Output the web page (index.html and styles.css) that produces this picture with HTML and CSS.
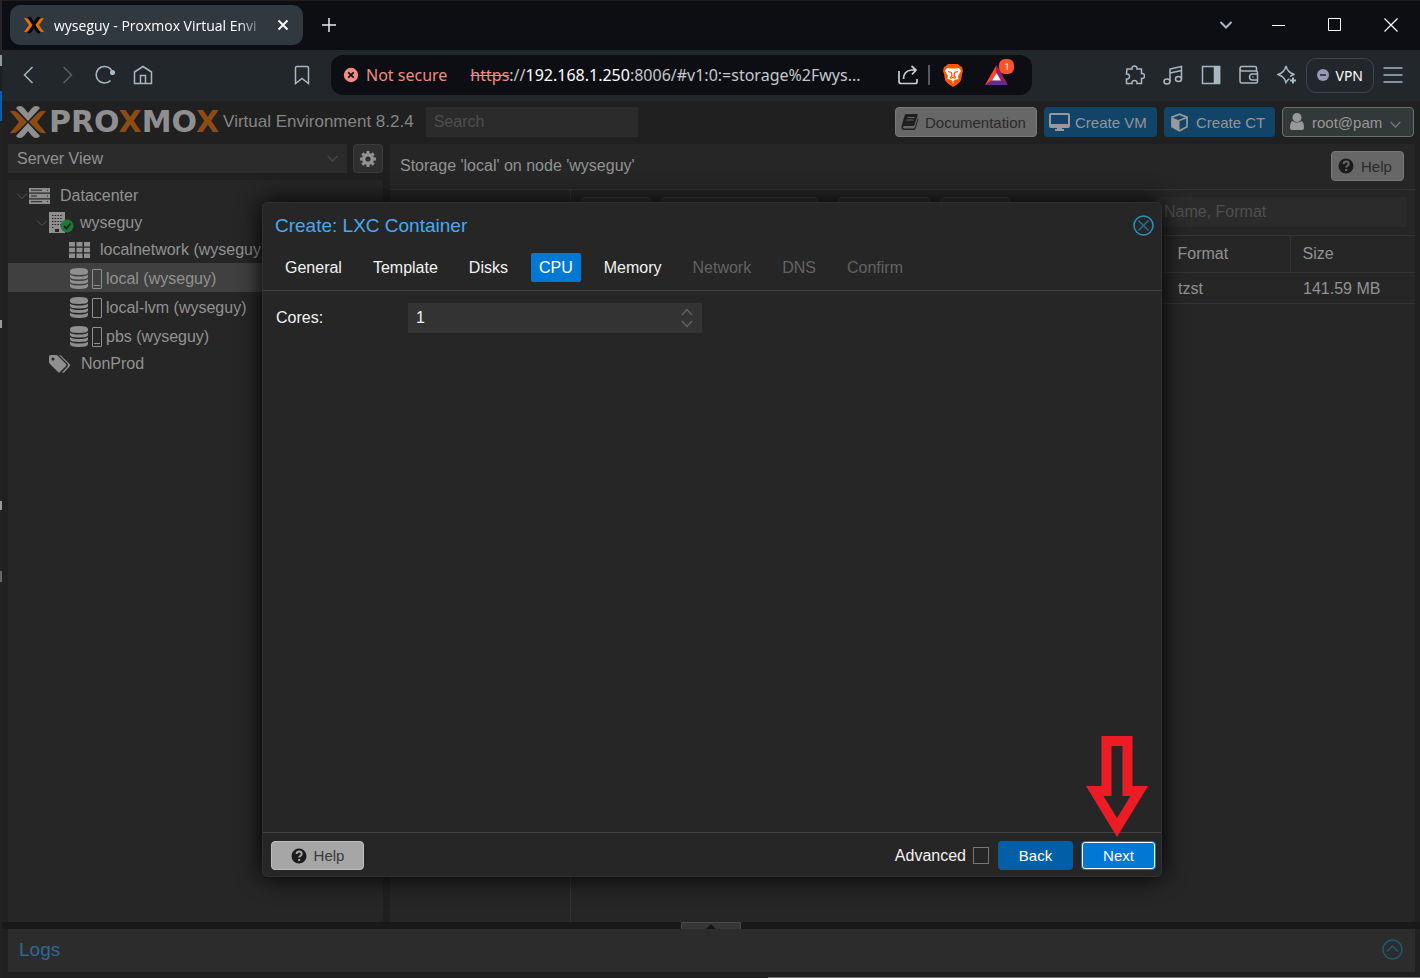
FILE: index.html
```
<!DOCTYPE html>
<html lang="en">

<head>
    <meta charset="UTF-8" />
    <meta name="viewport" content="width=device-width, initial-scale=1.0" />
    <title>wyseguy - Proxmox Virtual Environment</title>
    <link rel="stylesheet" href="styles.css">
</head>

<body>
    <div class="desktop-edge"></div>
    <div class="browser">
        <div class="tab-strip">
            <div class="browser-tab">
                <svg width="20" height="18" viewBox="0 0 20 18">
                    <path d="M3.500 1q2.500-1 4 1L10 5.500 12.500 2q1.500-2 4-1L11.500 9l5 8q-2.500 1-4-1L10 12.500 7.500 16q-1.500 2-4 1l5-8z" fill="#000" />
                    <path d="M0 2q3-.5 4.500 1.500L8.500 9l-4 5.500Q3 16.500 0 16l5-7zM20 2q-3-.5-4.500 1.500L11.500 9l4 5.500q1.500 2 4.500 1.500l-5-7z" fill="#e57000" />
                </svg>
                <span class="tab-title">wyseguy - Proxmox Virtual Envi</span>
                <button class="bare-btn" aria-label="Close tab">
                    <svg width="12" height="12" viewBox="0 0 12 12"><path d="M1.500 1.500l9 9M10.500 1.500l-9 9" stroke="#fff" stroke-width="1.800" /></svg>
                </button>
            </div>
            <button class="bare-btn new-tab" aria-label="New tab">
                <svg width="14" height="14" viewBox="0 0 14 14"><path d="M7 0v14M0 7h14" stroke="#e8ecef" stroke-width="1.500" /></svg>
            </button>
            <div class="window-controls">
                <button class="bare-btn tab-search" aria-label="Search tabs">
                    <svg width="14" height="10" viewBox="0 0 14 10"><path d="M1.500 2L7 7.500 12.500 2" fill="none" stroke="#a7b8c2" stroke-width="2" /></svg>
                </button>
                <button class="bare-btn" aria-label="Minimize">
                    <svg width="14" height="14" viewBox="0 0 14 14"><path d="M0 7.500h13" stroke="#fff" /></svg>
                </button>
                <button class="bare-btn" aria-label="Maximize">
                    <svg width="14" height="14" viewBox="0 0 14 14"><path d="M.5.5h12v12H.5z" fill="none" stroke="#fff" /></svg>
                </button>
                <button class="bare-btn" aria-label="Close window">
                    <svg width="14" height="14" viewBox="0 0 14 14"><path d="M.5.5l13 13M13.500.5l-13 13" stroke="#fff" stroke-width="1.200" /></svg>
                </button>
            </div>
        </div>

        <div class="toolbar">
            <button class="bare-btn tool" aria-label="Back">
                <svg width="20" height="20" viewBox="0 0 20 20"><path d="M13.500 2L5.500 10l8 8" /></svg>
            </button>
            <button class="bare-btn tool tool-off" aria-label="Forward">
                <svg width="20" height="20" viewBox="0 0 20 20"><path d="M6.500 2l8 8-8 8" /></svg>
            </button>
            <button class="bare-btn tool" aria-label="Reload">
                <svg width="20" height="20" viewBox="0 0 20 20"><path d="M15.500 15.500A8.300 8.300 0 1 1 17.500 7.500" /><circle cx="17.500" cy="7.500" r="1.800" fill="#a7b8c2" /></svg>
            </button>
            <button class="bare-btn tool" aria-label="Home">
                <svg width="20" height="20" viewBox="0 0 20 20"><path d="M1.500 7L10 1.500 18.500 7v11.500h-17zM7.500 18V10.500h5V18" /></svg>
            </button>
            <div class="address-area">
                <button class="bare-btn tool" aria-label="Bookmark">
                    <svg width="20" height="20" viewBox="0 0 20 20"><path d="M3.500 3q0-1.500 1.500-1.500h10q1.500 0 1.500 1.500v15.500L10 13.500l-6.500 5z" /></svg>
                </button>
                <div class="address-bar">
                    <svg width="16" height="16" viewBox="0 0 16 16"><circle cx="8" cy="8" r="7.200" fill="#f28b82" /><path d="M5.300 5.300l5.400 5.400M10.700 5.300l-5.400 5.400" stroke="#0d0e14" stroke-width="1.800" /></svg>
                    <span class="not-secure">Not secure</span>
                    <span class="url"><s>https</s>://<b>192.168.1.250</b>:8006/#v1:0:=storage%2Fwys...</span>
                    <svg class="share" width="20" height="20" viewBox="0 0 20 20" fill="none" stroke="#c8ced2" stroke-width="1.700"><path d="M1 6v10.500q0 2 2 2h14.500q1.500 0 1.500-2V14M5.500 14q0-8 8-9h4M13.500 1L18 5l-4 4.500" /></svg>
                    <span class="divider"></span>
                    <svg class="brave" width="20" height="24" viewBox="0 0 20 24">
                        <path d="M5 1h10l2 2 2 1 1 4-1 3-1 6q-1 3-8 7-7-4-8-7L1 11 0 8l1-4 2-1z" fill="#ff5500" />
                        <path d="M4 5l4 .5h4L16 5l2 3-3 5 .5 3-4 1L10 21l-1.500-4-4-1L5 13 2 8z" fill="#fff" />
                        <path d="M5 8.500l3.500 1L9 13l-2 1.500M15 8.500l-3.500 1L11 13l2 1.500M7.500 15.500l2.500-1 2.500 1M10 18v1.500" fill="none" stroke="#ff5500" stroke-width="1.200" />
                    </svg>
                    <span class="rewards">
                        <svg width="23" height="20" viewBox="0 0 23 20">
                            <path d="M11.500 0v8L7 15.500 0 20z" fill="#ff4724" />
                            <path d="M11.500 0L23 20l-7-4.500L11.500 8z" fill="#9e1f63" />
                            <path d="M0 20l7-4.500h9L23 20z" fill="#662d91" />
                            <path d="M11.500 8l4.500 7.500H7z" fill="#fff" />
                        </svg>
                        <span class="badge">1</span>
                    </span>
                </div>
            </div>
            <button class="bare-btn tool" aria-label="Extensions">
                <svg width="20" height="20" viewBox="0 0 20 20"><path d="M2 4h5c-1-4 6-4 5 0h4.500v4.500c4-1 4 6 0 5V18.500H12c1-4-6-4-5 0H1.500V14c4 1 4-6 0-5z" /></svg>
            </button>
            <button class="bare-btn tool" aria-label="Media">
                <svg width="20" height="20" viewBox="0 0 20 20"><ellipse cx="4" cy="16.500" rx="3" ry="2.500" /><ellipse cx="15.500" cy="14" rx="3" ry="2.500" /><path d="M7 16.500V4l11.500-2.500V14M7 8l11.500-2.500" /></svg>
            </button>
            <button class="bare-btn tool" aria-label="Sidebar">
                <svg width="20" height="20" viewBox="0 0 20 20"><path d="M1.500 1.500h17v17h-17z" /><path d="M13.500 2h5v16h-5z" fill="#a7b8c2" /></svg>
            </button>
            <button class="bare-btn tool" aria-label="Wallet">
                <svg width="20" height="20" viewBox="0 0 20 20"><path d="M17.500 6V3q0-1.500-1.500-1.500H3q-2 0-2 2.200T3.500 6H17q1.500 0 1.500 1.500v9q0 1.500-1.500 1.500H3q-2 0-2-2V4M18.500 9h-5a3 3 0 0 0 0 6h5M13.500 12h1" /></svg>
            </button>
            <button class="bare-btn tool" aria-label="Assistant">
                <svg width="20" height="20" viewBox="0 0 20 20"><path d="M12.500 14q-1.500 0-3.500 3.500Q7.500 11.500 1 9.500 7.500 7.500 9 1q1.500 6.500 8.500 8.500-2.500.5-4.500 2" /><path d="M16 12.500v6M13 15.500h6" stroke-width="2" /></svg>
            </button>
            <button class="vpn-btn">
                <svg width="12" height="12" viewBox="0 0 12 12"><circle cx="6" cy="6" r="6" fill="#9a99b5" /><path d="M3 6h6" stroke="#22272b" stroke-width="1.500" /></svg>
                VPN
            </button>
            <button class="bare-btn tool" aria-label="Menu">
                <svg width="20" height="20" viewBox="0 0 20 20"><path d="M.5 3h19M.5 10h19M.5 17h19" /></svg>
            </button>
        </div>

        <div class="app">
            <header class="app-header">
                <svg class="logo-mark" width="36" height="32" viewBox="0 0 36 32">
                    <path d="M6 2q1-2 4-2 2 0 4 2l4 5 4-5q2-2 4-2 3 0 4 2L18 15zM6 30q1 2 4 2 2 0 4-2l4-5 4 5q2 2 4 2 3 0 4-2L18 17z" fill="#8f8f8f" />
                    <path d="M0 5q5-1 8 2l9 9-9 9q-3 3-8 2l9-11zM36 5q-5-1-8 2l-9 9 9 9q3 3 8 2l-9-11z" fill="#8c4c13" />
                </svg>
                <span class="logo-text">PRO<i>X</i>MO<i>X</i></span>
                <span class="version">Virtual Environment 8.2.4</span>
                <input type="text" class="field global-search" placeholder="Search" aria-label="Search">
                <div class="header-buttons">
                    <button class="btn btn-grey btn-docs">
                        <svg width="18" height="18" viewBox="0 0 18 18"><path d="M5 1h11q1 0 .700 1L13.500 12q-.5 1-1.500 1H3.500q-1.500 0-1.500 1.200t1.500 1.300h9q1 0 1.400-1.200L17 5l.5 1-3 9.500q-.5 1.500-2 1.500H3Q0 17 .5 13L3.500 3Q4 1 5 1z" fill="#1f1f1f" /><path d="M6.500 4.500h7M5.500 7h7" stroke="#676767" /></svg>
                        Documentation
                    </button>
                    <button class="btn btn-dim btn-vm">
                        <svg width="21" height="18" viewBox="0 0 21 18"><path d="M2 1h17q1 0 1 1v11q0 1-1 1H2q-1 0-1-1V2q0-1 1-1z" fill="none" stroke="#999" stroke-width="2" /><path d="M1 11h19v3H1zM8 14h5v2h2v2H6v-2h2z" fill="#999" /></svg>
                        Create VM
                    </button>
                    <button class="btn btn-dim btn-ct">
                        <svg width="19" height="19" viewBox="0 0 19 19"><path d="M9.500 1.200l7.500 3v9.500l-7.500 4-7.500-4V4.200z" fill="none" stroke="#999" stroke-width="1.700" /><path d="M2 4.500l7.500 3v10L2 13.500z" fill="#999" /><path d="M9 7.500l8-3" stroke="#999" stroke-width="1.500" /></svg>
                        Create CT
                    </button>
                    <button class="btn btn-user">
                        <svg width="14" height="18" viewBox="0 0 14 18"><circle cx="7" cy="4.500" r="4.500" fill="#999" /><path d="M2.500 8q4.500 3 9 0Q14 9 14 15q0 2-2 2H2q-2 0-2-2 0-6 2.500-7z" fill="#999" /></svg>
                        root@pam
                        <svg class="caret" width="11" height="7" viewBox="0 0 11 7"><path d="M.7 1l4.800 5 4.800-5" fill="none" stroke="#777" stroke-width="1.300" /></svg>
                    </button>
                </div>
            </header>

            <div class="workspace">
                <aside class="sidebar">
                    <div class="view-row">
                        <button class="view-select">
                            Server View
                            <svg width="11" height="7" viewBox="0 0 11 7"><path d="M.7 1l4.800 5 4.800-5" fill="none" stroke="#484848" stroke-width="1.300" /></svg>
                        </button>
                        <button class="gear-btn" aria-label="Tree settings">
                            <svg width="16" height="16" viewBox="-8 -8 16 16"><g fill="#929292"><path d="M-1.500-8h3v16h-3zM-8-1.500h16v3H-8z" /><path d="M-1.500-8h3v16h-3zM-8-1.500h16v3H-8z" transform="rotate(45)" /><circle r="6" /></g><circle r="2.600" fill="#2f2f2f" /></svg>
                        </button>
                    </div>
                    <ul class="tree">
                        <li class="tree-row level-0">
                            <svg class="twisty" viewBox="0 0 12 12"><path d="M1 3.500l5 5 5-5" /></svg>
                            <svg width="21" height="16" viewBox="0 0 21 16"><path d="M0 0h21v4.500H0zM0 5.700h21v4.500H0zM0 11.500h21V16H0z" fill="#8f8f8f" /><path d="M2 2.200h11M2 8h6M2 13.700h11M18 2.200h1M18 8h1M18 13.700h1" stroke="#262626" /></svg>
                            <span class="node-label">Datacenter</span>
                        </li>
                        <li class="tree-row level-1">
                            <svg class="twisty" viewBox="0 0 12 12"><path d="M1 3.500l5 5 5-5" /></svg>
                            <svg width="25" height="21" viewBox="0 0 25 21"><path d="M0 0h16v21H0z" fill="#8f8f8f" /><path d="M3 3.500h10M3 6.500h10M3 9.500h10M3 12.500h10M3 15.500h2" stroke="#262626" stroke-dasharray="1.500 1.200" /><path d="M6 17h4v3H6z" fill="#262626" /><circle cx="18" cy="14" r="6.500" fill="#1f7a38" /><path d="M15 14l2.500 2.500 4-5" fill="none" stroke="#222" stroke-width="2" /></svg>
                            <span class="node-label tight">wyseguy</span>
                        </li>
                        <li class="tree-row level-2">
                            <svg width="21" height="16" viewBox="0 0 21 16"><path d="M0 0h6v4.500H0zM7.500 0h6v4.500h-6zM15 0h6v4.500h-6zM0 5.800h6v4.500H0zM7.500 5.800h6v4.500h-6zM15 5.800h6v4.500h-6zM0 11.500h6V16H0zM7.500 11.500h6V16h-6zM15 11.500h6V16h-6z" fill="#8f8f8f" /></svg>
                            <span class="node-label">localnetwork (wyseguy)</span>
                        </li>
                        <li class="tree-row level-2 storage selected">
                            <svg width="20" height="21" viewBox="0 0 20 21"><path d="M1 3q0-3 9-3t9 3v1.500q0 2.500-9 2.500T1 4.500zM1 6.500q2 2 9 2t9-2V9q0 2.500-9 2.500T1 9zM1 11q2 2 9 2t9-2v2.500q0 2.500-9 2.500t-9-2.500zM1 15.500q2 2 9 2t9-2V18q0 3-9 3t-9-3z" fill="#8f8f8f" /></svg>
                            <span class="usage"><span class="usage-fill"></span></span>
                            <span>local (wyseguy)</span>
                        </li>
                        <li class="tree-row level-2 storage">
                            <svg width="20" height="21" viewBox="0 0 20 21"><path d="M1 3q0-3 9-3t9 3v1.500q0 2.500-9 2.500T1 4.500zM1 6.500q2 2 9 2t9-2V9q0 2.500-9 2.500T1 9zM1 11q2 2 9 2t9-2v2.500q0 2.500-9 2.500t-9-2.500zM1 15.500q2 2 9 2t9-2V18q0 3-9 3t-9-3z" fill="#8f8f8f" /></svg>
                            <span class="usage"></span>
                            <span>local-lvm (wyseguy)</span>
                        </li>
                        <li class="tree-row level-2 storage">
                            <svg width="20" height="21" viewBox="0 0 20 21"><path d="M1 3q0-3 9-3t9 3v1.500q0 2.500-9 2.500T1 4.500zM1 6.500q2 2 9 2t9-2V9q0 2.500-9 2.500T1 9zM1 11q2 2 9 2t9-2v2.500q0 2.500-9 2.500t-9-2.500zM1 15.500q2 2 9 2t9-2V18q0 3-9 3t-9-3z" fill="#8f8f8f" /></svg>
                            <span class="usage"><span class="usage-fill"></span></span>
                            <span>pbs (wyseguy)</span>
                        </li>
                        <li class="tree-row level-1 leaf">
                            <svg width="22" height="18" viewBox="0 0 22 18"><path d="M0 1.500Q0 0 1.500 0H7q1 0 2 1l8 8q1 1 0 2l-6 6q-1 1-2 0L1 9Q0 8 0 7z" fill="#8f8f8f" /><path d="M10 0h1l1.500 1 8 8q1 1 0 2.500L15 17.500q-1 .7-2 0l5.500-6q1-1.500 0-2.700z" fill="#8f8f8f" /><circle cx="4" cy="4" r="1.500" fill="#262626" /></svg>
                            <span class="node-label">NonProd</span>
                        </li>
                    </ul>
                </aside>

                <main class="content">
                    <div class="content-header">
                        <span>Storage 'local' on node 'wyseguy'</span>
                        <button class="btn btn-grey btn-help">
                            <svg width="16" height="16" viewBox="0 0 16 16"><circle cx="8" cy="8" r="7.500" fill="#1b1b1b" /><path d="M5.500 6q.3-2.500 2.700-2.500T10.700 6q0 1-1.300 1.800-1.200.7-1.200 1.700M8.200 11v2" fill="none" stroke="#676767" stroke-width="2" /></svg>
                            Help
                        </button>
                    </div>
                    <div class="content-body">
                        <div class="side-nav"></div>
                        <div class="grid-panel">
                            <div class="grid-toolbar">
                                <span class="grid-btn"></span>
                                <span class="grid-btn wide"></span>
                                <span class="grid-btn apart"></span>
                                <span class="grid-btn"></span>
                                <input type="text" class="field grid-search" placeholder="Name, Format" aria-label="Filter">
                            </div>
                            <table class="grid">
                                <thead>
                                    <tr><th></th><th class="col-small">Format</th><th class="col-small">Size</th></tr>
                                </thead>
                                <tbody>
                                    <tr><td></td><td>tzst</td><td>141.59 MB</td></tr>
                                </tbody>
                            </table>
                        </div>
                    </div>
                </main>
            </div>

            <div class="splitter">
                <svg width="60" height="7" viewBox="0 0 60 7"><path d="M0 0h60v7H0z" fill="#363636" /><path d="M.5 7V.5h59V7" fill="none" stroke="#484848" /><path d="M25 7l5-5 5 5z" fill="#161616" /></svg>
            </div>
            <footer class="logs">
                <span>Logs</span>
                <button class="bare-btn" aria-label="Expand logs">
                    <svg width="21" height="21" viewBox="0 0 21 21" fill="none" stroke="#1d5b75" stroke-width="1.500"><circle cx="10.500" cy="10.500" r="9.500" /><path d="M5 12.500l5.500-5.500 5.500 5.500" /></svg>
                </button>
            </footer>
            <div class="screen-edge"></div>

            <div class="modal-layer">
                <section class="dialog" role="dialog" aria-labelledby="dialogTitle">
                    <div class="dialog-title">
                        <h1 id="dialogTitle">Create: LXC Container</h1>
                        <button class="bare-btn" aria-label="Close dialog">
                            <svg width="21" height="21" viewBox="0 0 21 21" fill="none" stroke="#2894bd" stroke-width="1.500"><circle cx="10.500" cy="10.500" r="9.500" /><path d="M5.500 5.500l10 10M15.500 5.500l-10 10" stroke="#1d6f96" /></svg>
                        </button>
                    </div>
                    <nav class="wizard-tabs">
                        <button>General</button>
                        <button>Template</button>
                        <button>Disks</button>
                        <button class="active">CPU</button>
                        <button>Memory</button>
                        <button disabled>Network</button>
                        <button disabled>DNS</button>
                        <button disabled>Confirm</button>
                    </nav>
                    <div class="wizard-body">
                        <label for="cores">Cores:</label>
                        <div class="spin-field">
                            <input type="text" inputmode="numeric" id="cores" value="1">
                            <svg width="12" height="20" viewBox="0 0 12 20"><path d="M1 7l5-5.500L11 7M1 13l5 5.500 5-5.500" fill="none" stroke="#626262" stroke-width="1.500" /></svg>
                        </div>
                    </div>
                    <div class="wizard-footer">
                        <button class="btn btn-light">
                            <svg width="16" height="16" viewBox="0 0 16 16"><circle cx="8" cy="8" r="7.500" fill="#1b1b1b" /><path d="M5.500 6q.3-2.500 2.700-2.500T10.700 6q0 1-1.300 1.800-1.200.7-1.200 1.700M8.200 11v2" fill="none" stroke="#a6a6a6" stroke-width="2" /></svg>
                            Help
                        </button>
                        <label for="advanced" class="advanced">Advanced</label>
                        <input type="checkbox" id="advanced">
                        <button class="btn btn-back">Back</button>
                        <button class="btn btn-next">Next</button>
                    </div>
                    <svg class="pointer-arrow" width="62" height="101" viewBox="0 0 62 101"><path d="M15.500 0h31v50H62L31 101 0 50h15.500zM25.500 10v50H17.500L31 82l13.500-22h-8V10z" fill="#ed1c24" fill-rule="evenodd" /></svg>
                </section>
            </div>
        </div>
    </div>
</body>

</html>
```

FILE: styles.css
```
* {
    box-sizing: border-box;
}

body {
    margin: 0;
    display: flex;
    height: 100vh;
    overflow: hidden;
    background-color: #202020;
    color: #929292;
    font-family: "Liberation Sans", Arial, sans-serif;
    font-size: 16px;
}

button,
input {
    font: inherit;
    color: inherit;
}

svg {
    flex: none;
    display: block;
}

.bare-btn {
    display: flex;
    justify-content: center;
    align-items: center;
    padding: 0;
    border: none;
    background: none;
}

/* sliver of the window that sits behind the browser */
.desktop-edge {
    width: 2px;
    background: linear-gradient(#262626 55px, #999 55px, #999 66px, #1f1f1f 66px, #1f1f1f 91px, #0b5fa8 91px, #0b5fa8 121px, #222 121px, #222 320px, #999 320px, #999 328px, #222 328px, #222 501px, #999 501px, #999 510px, #222 510px, #222 571px, #666 571px, #666 582px, #222 582px);
}

.browser {
    flex: 1;
    min-width: 0;
    display: flex;
    flex-direction: column;
    border-top: 1px solid #1e1e1e;
}

/* browser chrome */
.tab-strip {
    display: flex;
    align-items: center;
    height: 49px;
    padding: 0 1px 1px 8px;
    background-color: #0d0e14;
}

.browser-tab {
    display: flex;
    align-items: center;
    width: 293px;
    height: 40px;
    padding: 0 14px;
    border-radius: 10px;
    background-color: #303940;
}

.tab-title {
    flex: 1;
    margin: 0 8px 0 10px;
    white-space: nowrap;
    color: #fff;
    font-family: "Open Sans", sans-serif;
    font-size: 14px;
    mask-image: linear-gradient(to right, #000 86%, transparent 98%);
}

.new-tab {
    width: 52px;
    height: 40px;
}

.window-controls {
    display: flex;
    margin-left: auto;
}

.window-controls .bare-btn {
    width: 56px;
    height: 48px;
}

.window-controls .tab-search {
    width: 50px;
}

.toolbar {
    display: flex;
    align-items: center;
    height: 51px;
    padding: 0 8px 1px;
    background-color: #22272b;
    font-family: "Noto Sans", sans-serif;
}

.tool {
    width: 38px;
    height: 38px;
}

.tool svg {
    fill: none;
    stroke: #a7b8c2;
    stroke-width: 1.5px;
}

.tool-off svg {
    stroke: #566068;
}

.address-area {
    flex: 1;
    display: flex;
    align-items: center;
    gap: 10px;
    min-width: 0;
    margin: 0 84px 0 121px;
}

.address-bar {
    flex: 1;
    display: flex;
    align-items: center;
    min-width: 0;
    height: 40px;
    padding: 0 20px 0 12px;
    border-radius: 12px;
    background-color: #0d0e14;
    white-space: nowrap;
}

.not-secure {
    margin: 0 23px 0 7px;
    color: #f28b82;
}

.url {
    flex: 1;
    color: #c4c7ca;
}

.url s {
    color: #f28b82;
}

.url b {
    color: #fff;
    font-weight: normal;
}

.divider {
    width: 2px;
    height: 20px;
    margin: 0 13px 0 10px;
    background-color: #55595f;
}

.rewards {
    position: relative;
    margin: 0 4px 0 22px;
}

.badge {
    position: absolute;
    top: -6px;
    right: -6px;
    width: 15px;
    height: 15px;
    border-radius: 6px;
    background-color: #fb542b;
    color: #fff;
    font-size: 9px;
    line-height: 15px;
    text-align: center;
}

.vpn-btn {
    display: flex;
    align-items: center;
    gap: 6px;
    height: 35px;
    padding: 0 10px;
    border: 1px solid #3e474d;
    border-radius: 10px;
    background: none;
    color: #fff;
    font-size: 14px;
}

/* proxmox app */
.app {
    position: relative;
    flex: 1;
    display: flex;
    flex-direction: column;
    min-height: 0;
    background-color: #202020;
}

.app-header {
    display: flex;
    align-items: center;
    height: 43px;
    padding: 0 6px 1px 8px;
}

.logo-text {
    margin: 0 4px 0 3px;
    color: #8f8f8f;
    font-family: "DejaVu Sans", sans-serif;
    font-size: 30px;
    font-weight: bold;
    line-height: 40px;
}

.logo-text i {
    color: #8c4c13;
    font-style: normal;
}

.version {
    color: #858585;
    font-size: 17px;
    white-space: nowrap;
}

.field {
    height: 30px;
    padding: 0 8px;
    border: none;
    border-radius: 0;
    background-color: #2b2b2b;
}

.field::placeholder {
    color: #4f4f4f;
    opacity: 1;
}

.global-search {
    width: 212px;
    margin-left: 12px;
}

.header-buttons {
    display: flex;
    gap: 7px;
    margin-left: auto;
}

.btn {
    display: flex;
    justify-content: center;
    align-items: center;
    gap: 7px;
    height: 30px;
    padding: 0 5px;
    border: 1px solid transparent;
    border-radius: 4px;
    font-size: 15px;
    white-space: nowrap;
}

.header-buttons .btn {
    justify-content: flex-start;
}

.btn-grey {
    border-color: #787878;
    background-color: #676767;
    color: #292929;
}

.btn-docs {
    width: 142px;
    gap: 6px;
}

.btn-dim {
    background-color: #124467;
    color: #959595;
}

.btn-vm {
    width: 113px;
    gap: 5px;
    padding: 0 4px;
}

.btn-ct {
    width: 111px;
}

.btn-user {
    width: 132px;
    gap: 8px;
    padding: 0 7px;
    border-color: #687171;
    background-color: #333838;
    color: #999;
}

.caret {
    margin-top: 4px;
}

.workspace {
    flex: 1;
    display: flex;
    gap: 7px;
    min-height: 0;
    padding: 0 5px 0 6px;
}

.sidebar {
    display: flex;
    flex-direction: column;
    width: 375px;
}

.view-row {
    display: flex;
    gap: 6px;
    margin-bottom: 7px;
}

.view-select {
    flex: 1;
    display: flex;
    justify-content: space-between;
    align-items: center;
    height: 29px;
    padding: 0 9px;
    border: none;
    background-color: #2b2b2b;
}

.gear-btn {
    display: flex;
    justify-content: center;
    align-items: center;
    width: 30px;
    padding: 0;
    border: 1px solid #3c3c3c;
    border-radius: 4px;
    background-color: #2f2f2f;
}

.tree {
    flex: 1;
    margin: 0;
    padding: 2px 0 0;
    background-color: #262626;
    list-style: none;
}

.tree-row {
    display: flex;
    align-items: center;
    height: 27px;
    white-space: nowrap;
}

.level-0 {
    padding-left: 8px;
}

.level-1 {
    padding-left: 28px;
}

.leaf {
    padding-left: 41px;
}

.level-2 {
    padding-left: 61px;
}

.storage {
    gap: 3px;
    height: 29px;
    padding-top: 2px;
}

.selected {
    background-color: #404040;
}

.twisty {
    width: 12px;
    height: 12px;
    margin-right: 1px;
    fill: none;
    stroke: #555;
}

.node-label {
    margin-left: 10px;
}

.node-label.tight {
    margin-left: 6px;
}

.usage {
    display: flex;
    align-items: flex-end;
    width: 10px;
    height: 20px;
    margin-right: 1px;
    padding: 2px 1px;
    border: 1px solid #8f8f8f;
    border-radius: 1px;
}

.usage-fill {
    flex: 1;
    height: 1px;
    background-color: #8f8f8f;
}

.content {
    flex: 1;
    display: flex;
    flex-direction: column;
    min-width: 0;
    background-color: #262626;
}

.content-header {
    display: flex;
    justify-content: space-between;
    align-items: center;
    height: 46px;
    padding: 0 11px 1px 10px;
    border-bottom: 1px solid #333;
}

.btn-help {
    width: 73px;
    justify-content: flex-start;
    padding: 0 6px;
}

.content-body {
    flex: 1;
    display: flex;
}

.side-nav {
    width: 181px;
    border-right: 1px solid #333;
}

.grid-panel {
    flex: 1;
    min-width: 0;
}

.grid-toolbar {
    display: flex;
    gap: 10px;
    height: 45px;
    padding: 7px 9px 0 10px;
}

.grid-btn {
    width: 70px;
    height: 30px;
    border: 1px solid #3c3c3c;
    border-radius: 4px;
    background-color: #2f2f2f;
}

.grid-btn.wide {
    width: 157px;
}

.grid-btn.apart {
    width: 92px;
    margin-left: 10px;
}

.grid-search {
    width: 250px;
    margin-left: auto;
}

.grid {
    width: 100%;
    border-collapse: collapse;
    table-layout: fixed;
}

.grid th {
    height: 37px;
    padding: 0 12px;
    border: 1px solid #333;
    border-width: 1px 0 1px 1px;
    font-weight: normal;
    text-align: left;
}

.grid td {
    height: 31px;
    padding: 1px 13px 0;
    border-bottom: 1px solid #333;
}

.col-small {
    width: 125px;
}

.splitter {
    display: flex;
    justify-content: center;
    height: 7px;
    background-color: #191919;
}

.logs {
    display: flex;
    justify-content: space-between;
    align-items: center;
    height: 43px;
    margin: 0 5px 0 6px;
    padding: 0 12px 2px 11px;
    background-color: #2c2c2c;
    color: #306892;
    font-size: 19px;
}

.screen-edge {
    height: 6px;
    border-bottom: 1px solid #666;
    border-image: linear-gradient(to right, #202020 54%, #777 54%) 1;
}

/* wizard window */
.modal-layer {
    position: absolute;
    inset: 0;
    display: flex;
    justify-content: center;
    padding: 101px 20px 101px 22px;
}

.dialog {
    position: relative;
    display: flex;
    flex-direction: column;
    width: 100%;
    max-width: 900px;
    border: 1px solid #303030;
    border-radius: 5px;
    background-color: #262626;
    box-shadow: 0 0 24px #000;
    color: #f2f2f2;
}

.dialog-title {
    display: flex;
    justify-content: space-between;
    align-items: center;
    height: 45px;
    padding: 0 7px 0 12px;
}

.dialog-title h1 {
    margin: 0;
    color: #4aa9ee;
    font-size: 19px;
    font-weight: normal;
}

.wizard-tabs {
    display: flex;
    gap: 15px;
    padding: 5px 14px 8px;
    border-bottom: 1px solid #424242;
}

.wizard-tabs button {
    height: 29px;
    padding: 1px 8px 0;
    border: none;
    border-radius: 2px;
    background: none;
}

.wizard-tabs .active {
    background-color: #0078d4;
    color: #fff;
}

.wizard-tabs button:disabled {
    color: #636363;
}

.wizard-body {
    flex: 1;
    display: flex;
    align-items: flex-start;
    padding: 12px 13px;
    line-height: 30px;
}

.wizard-body label {
    width: 132px;
}

.spin-field {
    display: flex;
    align-items: center;
    width: 294px;
    height: 30px;
    padding-right: 9px;
    background-color: #333;
}

.spin-field input {
    flex: 1;
    min-width: 0;
    height: 30px;
    padding: 0 8px;
    border: none;
    background: none;
}

.wizard-footer {
    display: flex;
    align-items: center;
    height: 44px;
    padding: 2px 5px 0 8px;
    border-top: 1px solid #424242;
}

.wizard-footer .btn {
    height: 29px;
}

.btn-light {
    width: 93px;
    border-color: #bdbdbd;
    background-color: #a6a6a6;
    color: #3a3a3a;
}

.advanced {
    margin-left: auto;
}

.wizard-footer input {
    appearance: none;
    width: 16px;
    height: 17px;
    margin: 0 9px 0 7px;
    border: 1px solid #777;
}

.btn-back,
.btn-next {
    width: 75px;
    color: #fff;
}

.btn-back {
    margin-right: 8px;
    background-color: #005fa7;
}

.btn-next {
    border-color: #0078d4;
    background-color: #0078d4;
    box-shadow: inset 0 0 0 1px #fff;
}

.pointer-arrow {
    position: absolute;
    right: 13px;
    bottom: 39px;
}
```
